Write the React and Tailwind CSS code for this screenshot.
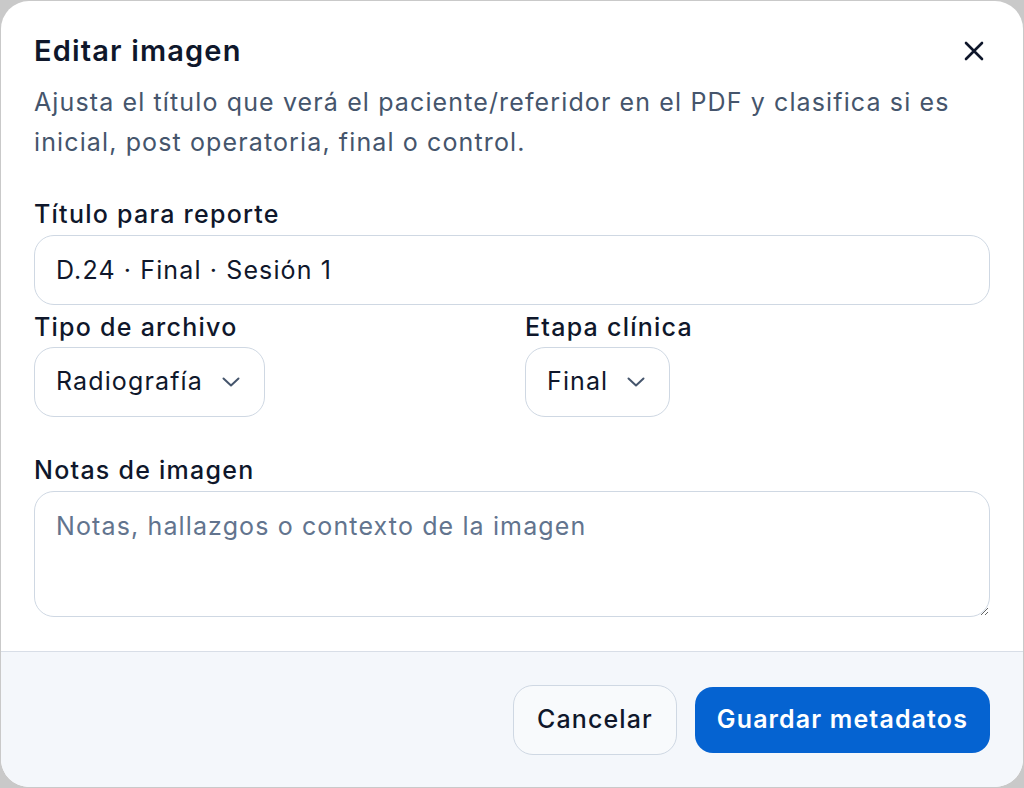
import { useState } from 'react'

function Chevron() {
  return (
    <svg viewBox="0 0 18 10" fill="none" stroke="currentColor" strokeWidth="2" strokeLinecap="round" strokeLinejoin="round" className="w-[18px] h-[10px] text-slate-600">
      <path d="M1.5 1.5 9 8.5l7.5-7" />
    </svg>
  )
}

function Select({ value }) {
  return (
    <button className="flex items-center gap-[19px] h-[70px] pl-[21px] pr-[24px] rounded-[20px] border border-[#cfd8e3] bg-white text-[25px] tracking-[0.045em] text-slate-900 w-fit">
      <span>{value}</span>
      <Chevron />
    </button>
  )
}

export default function App() {
  const [title, setTitle] = useState('D.24 · Final · Sesión 1')
  const [notes, setNotes] = useState('')

  return (
    <div className="h-[788px] bg-[#c9c9c9] p-px" style={{ fontFamily: 'Inter, "Noto Sans", sans-serif' }}>
      <div className="flex flex-col h-full bg-white rounded-[28px] overflow-hidden">
        <div className="flex-1 px-[33px] pt-[32px]">
          <div className="flex items-start justify-between">
            <h2 className="text-[29px] leading-[36px] font-semibold tracking-[0.04em] text-slate-900">Editar imagen</h2>
            <button className="mt-[8px] mr-[6px] text-slate-900" title="Cerrar">
              <svg viewBox="0 0 20 20" fill="none" stroke="currentColor" strokeWidth="2.6" strokeLinecap="round" className="w-[20px] h-[20px]">
                <path d="M2 2 18 18M18 2 2 18" />
              </svg>
            </button>
          </div>
          <p className="mt-[13px] text-[25px] leading-[40px] tracking-[0.045em] text-slate-600">
            Ajusta el título que verá el paciente/referidor en el PDF y clasifica si es inicial, post operatoria, final o control.
          </p>

          <label className="block mt-[36px] text-[25px] leading-[32px] font-medium tracking-[0.05em] text-slate-900">Título para reporte</label>
          <input
            value={title}
            onChange={e => setTitle(e.target.value)}
            className="mt-[5px] w-full h-[70px] px-[21px] rounded-[20px] border border-[#cfd8e3] text-[25px] tracking-[0.045em] text-slate-900 outline-none"
          />

          <div className="grid grid-cols-2 gap-x-[26px] mt-[6px]">
            <div>
              <div className="text-[25px] leading-[32px] font-medium tracking-[0.05em] text-slate-900">Tipo de archivo</div>
              <div className="mt-[4px]"><Select value="Radiografía" /></div>
            </div>
            <div>
              <div className="text-[25px] leading-[32px] font-medium tracking-[0.05em] text-slate-900">Etapa clínica</div>
              <div className="mt-[4px]"><Select value="Final" /></div>
            </div>
          </div>

          <label className="block mt-[37px] text-[25px] leading-[32px] font-medium tracking-[0.05em] text-slate-900">Notas de imagen</label>
          <textarea
            value={notes}
            onChange={e => setNotes(e.target.value)}
            placeholder="Notas, hallazgos o contexto de la imagen"
            className="block mt-[5px] w-full h-[126px] px-[21px] py-[18px] rounded-[20px] border border-[#cfd8e3] text-[25px] leading-[32px] tracking-[0.045em] text-slate-900 placeholder:text-slate-500 outline-none resize-y"
          />
        </div>

        <div className="flex items-center justify-end gap-[18px] h-[136px] px-[33px] border-t border-[#d8dee7] bg-[#f4f7fb]">
          <button className="h-[70px] px-[23px] rounded-[20px] border border-[#cfd8e3] bg-[#f8fafc] text-[25px] font-medium tracking-[0.045em] text-slate-900">Cancelar</button>
          <button className="h-[66px] px-[22px] rounded-[18px] bg-[#0563d1] text-[25px] font-semibold tracking-[0.045em] text-white">Guardar metadatos</button>
        </div>
      </div>
    </div>
  )
}
